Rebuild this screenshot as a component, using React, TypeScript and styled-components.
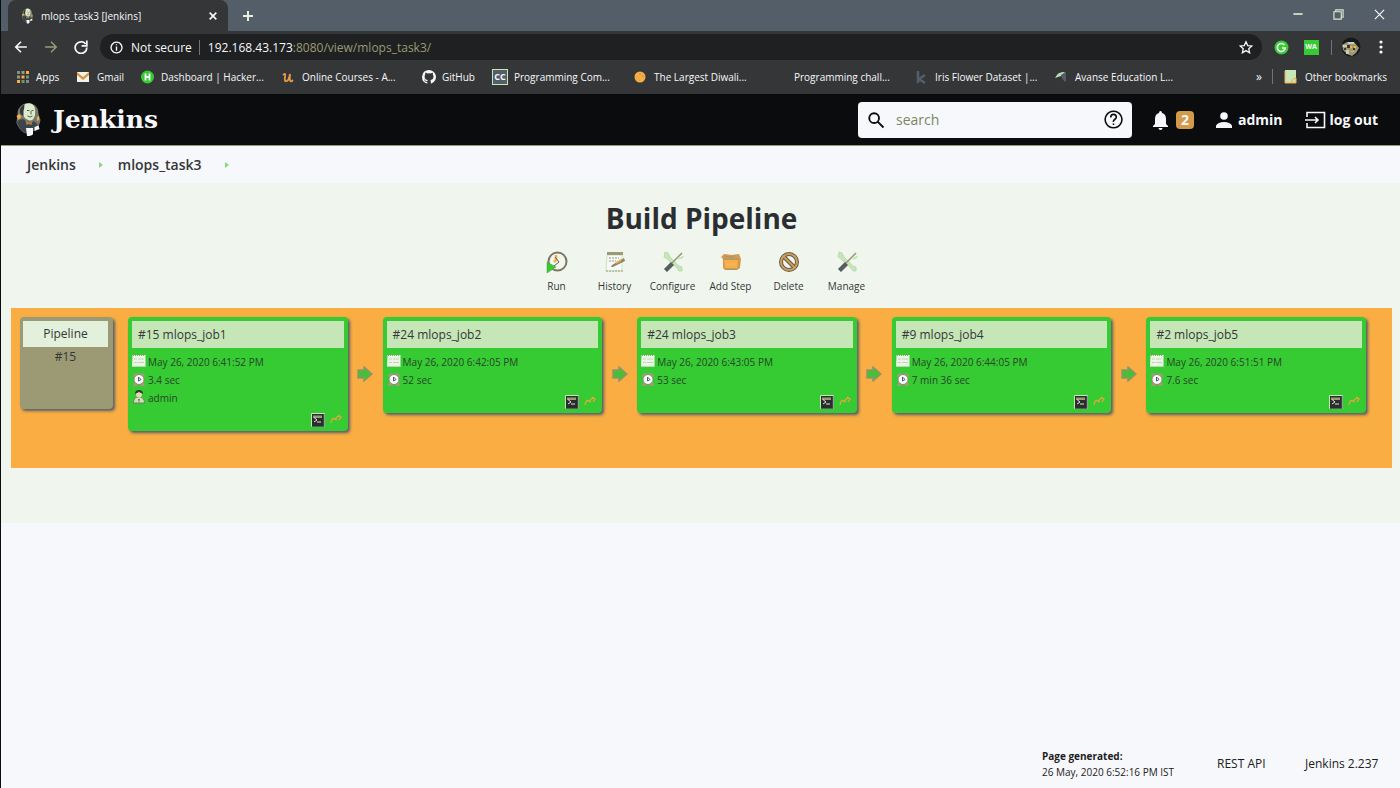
import React from "react";
import styled, { createGlobalStyle } from "styled-components";

const sans = `"Segoe UI", "Open Sans", "Noto Sans", sans-serif`;

const GlobalStyle = createGlobalStyle`
  * { box-sizing: border-box; }
  body { margin: 0; background: #f7f8fb; font-family: ${sans}; color: #343638; }
  button, input { font-family: inherit; }
  button { border: 0; padding: 0; background: none; color: inherit; cursor: pointer; }
  a { color: inherit; text-decoration: none; }
  svg { display: block; flex: none; }
`;

const Window = styled.div`
  display: flex;
  flex-direction: column;
  min-height: 100vh;
  border-left: 1px solid #0b0c0e;
`;

/* Browser chrome */

const TabStrip = styled.div`
  display: flex;
  height: 31px;
  background: #545e68;
  padding-left: 7px;
  color: #f7f8fb;
`;

const Tab = styled.div`
  display: flex;
  align-items: center;
  width: 220px;
  padding: 0 10px 0 12px;
  background: #343638;
  border-radius: 8px 8px 0 0;
`;

const TabTitle = styled.span`
  flex: 1;
  margin-left: 6px;
  font-size: 10px;
  white-space: nowrap;
`;

const IconButton = styled.button<{ $w?: number }>`
  display: flex;
  align-items: center;
  justify-content: center;
  width: ${(p) => p.$w ?? 30}px;
  flex: none;
`;

const WindowButtons = styled.div`
  display: flex;
  margin-left: auto;
  height: 28px;
`;

const Toolbar = styled.div`
  display: flex;
  align-items: center;
  height: 32px;
  padding-left: 5px;
  background: #343638;
  color: #f7f8fb;
`;

const AddressBar = styled.div`
  display: flex;
  align-items: center;
  flex: 1;
  height: 26px;
  margin-left: 4px;
  padding: 0 8px 0 10px;
  border-radius: 13px;
  background: #1e2021;
  font-size: 12px;
  white-space: nowrap;
`;

const Security = styled.span`
  margin: 0 7px 0 8px;
`;

const Divider = styled.span<{ $h: number }>`
  width: 1px;
  height: ${(p) => p.$h}px;
  background: #6d767e;
  flex: none;
`;

const DividerCell = styled.span`
  display: flex;
  justify-content: center;
  width: 18px;
`;

const Url = styled.div`
  flex: 1;
  margin-left: 8px;
  color: #9b9a74;
  outline: none;
`;

const Host = styled.span`
  color: #f7f8fb;
`;

const BookmarkBar = styled.nav`
  display: flex;
  align-items: center;
  height: 31px;
  padding: 0 13px 4px 14px;
  background: #343638;
  color: #f7f8fb;
  font-size: 10px;
  white-space: nowrap;
`;

const Bookmark = styled.a<{ $w?: number }>`
  display: flex;
  align-items: center;
  gap: 6px;
  width: ${(p) => (p.$w ? `${p.$w}px` : "auto")};
  flex: none;
`;

const More = styled.button`
  margin-left: auto;
  margin-right: 10px;
  font-size: 12px;
  line-height: 16px;
`;

const Folder = styled(Bookmark)`
  margin-left: 11px;
`;

/* Jenkins header */

const Header = styled.header`
  display: flex;
  align-items: center;
  height: 51px;
  padding: 0 22px 0 14px;
  background: #0b0c0e;
  color: #f7f8fb;
  font-size: 14px;
  font-weight: 700;
`;

const Brand = styled.a`
  display: flex;
  align-items: center;
  gap: 11px;
  font: 700 25px/32px "DejaVu Serif", Georgia, serif;
`;

const SearchBox = styled.form`
  display: flex;
  align-items: center;
  gap: 11px;
  width: 274px;
  height: 36px;
  margin: 0 20px 0 auto;
  padding: 0 9px;
  border-radius: 4px;
  background: #f7f8fb;
  color: #0b0c0e;
`;

const SearchInput = styled.input`
  flex: 1;
  min-width: 0;
  border: 0;
  padding: 0;
  outline: 0;
  background: none;
  font-size: 14px;
  &::placeholder { color: #7b8560; opacity: 1; }
`;

const HeaderLinks = styled.nav`
  display: flex;
  gap: 22px;
`;

const HeaderLink = styled.a<{ $gap: number }>`
  display: flex;
  align-items: center;
  gap: ${(p) => p.$gap}px;
  line-height: 20px;
  white-space: nowrap;
`;

const Badge = styled.span`
  width: 18px;
  height: 18px;
  border-radius: 4px;
  background: #d39a4c;
  text-align: center;
  line-height: 18px;
`;

const Breadcrumbs = styled.nav`
  display: flex;
  align-items: center;
  height: 38px;
  padding-left: 26px;
  border-top: 1px solid #9b9a74;
  background: #f7f8fb;
  font-size: 14px;
  font-weight: 600;
  svg { margin: 0 14px 0 22px; }
`;

/* Pipeline view */

const View = styled.main`
  min-height: 340px;
  padding: 14px 8px 0 10px;
  background: #f0f6ee;
`;

const Title = styled.h1`
  margin: 0;
  font-size: 28px;
  line-height: 42px;
  text-align: center;
  color: #2b2e31;
`;

const Actions = styled.div`
  display: flex;
  justify-content: center;
  height: 69px;
  padding-top: 12px;
`;

const Action = styled.button`
  display: flex;
  flex-direction: column;
  align-items: center;
  gap: 5px;
  width: 58px;
  font-size: 10px;
  line-height: 16px;
  white-space: nowrap;
`;

const Track = styled.section`
  display: flex;
  align-items: flex-start;
  min-height: 160px;
  padding: 9px 26px 0 9px;
  background: #f9ad42;
`;

const Revision = styled.div`
  width: 93px;
  height: 92px;
  margin-right: 15px;
  padding: 4px 5px 0 3px;
  flex: none;
  border-radius: 4px;
  background: #9b9a74;
  box-shadow: 2px 2px 3px #545e68;
  font-size: 12px;
  text-align: center;
  line-height: 20px;
`;

const RevisionTitle = styled.div`
  height: 26px;
  background: #e2f0dc;
  line-height: 26px;
`;

const Job = styled.article<{ $tall?: boolean }>`
  display: flex;
  flex-direction: column;
  flex: 1 1 0;
  min-width: 0;
  height: ${(p) => (p.$tall ? 114 : 96)}px;
  padding: 4px;
  border-radius: 4px;
  background: #36cb32;
  box-shadow: 2px 2px 3px #545e68;
`;

const JobTitle = styled.a`
  height: 27px;
  margin-bottom: 5px;
  padding-left: 6px;
  background: #c7e6b8;
  font-size: 12px;
  line-height: 28px;
  white-space: nowrap;
`;

const Detail = styled.div`
  display: flex;
  align-items: center;
  gap: 2px;
  height: 18px;
  font-size: 10px;
  line-height: 18px;
  color: #27452a;
  white-space: nowrap;
`;

const JobTools = styled.div`
  display: flex;
  justify-content: flex-end;
  gap: 5px;
  margin-top: auto;
  padding-right: 2px;
`;

const ArrowCell = styled.div`
  display: flex;
  justify-content: center;
  width: 35px;
  padding-top: 49px;
  flex: none;
`;

const Footer = styled.footer`
  display: flex;
  align-items: center;
  justify-content: flex-end;
  gap: 37px;
  margin-top: auto;
  padding: 0 18px 8px;
  font-size: 12px;
  line-height: 16px;
  color: #1d2022;
`;

const Generated = styled.div`
  min-width: 138px;
  font-size: 10px;
`;

const FooterLink = styled.a<{ $w: number }>`
  min-width: ${(p) => p.$w}px;
`;

/* Drawings */

const Butler = ({ w, h }: { w: number; h: number }) => (
  <svg width={w} height={h} viewBox="0 0 26 35">
    <path d="M2 14Q1 6 8 2Q14 0 19 3Q23 6 23 12L25 18Q24 24 21 26L14 22L3 24Q0 20 2 14Z" fill="#77796a" />
    <path d="M6 10Q6 3 11 1.500Q17 0 19 5Q20 8 19.500 13Q18 19 14 18.500Q9 17 7.500 13Z" fill="#dcebd0" />
    <path d="M5 12Q3 6 9 2Q9 6 8 9L8 14Z" fill="#343638" />
    <path d="M11.500 8.500h2.500M16 8.500h2M15.500 9v3.500M12 14q3 2 5 0" stroke="#545e40" fill="none" />
    <path d="M1 14l3-2 2 3-3 3zM21.500 15l2-1v4l-2 1z" fill="#f9ad42" />
    <path d="M1 20Q4 16 8 17L14 21L18 19Q22 20 23 25L20 28L10 31Q4 29 1 20Z" fill="#3c444d" stroke="#77796a" strokeWidth=".6" />
    <path d="M10 18.500l4 2.500 3-2-1 4-3-1-2 1z" fill="#b8803e" />
    <path d="M10.500 26h7v6q-1 2-6 2zM19 25l4-1.500 1 3.500-5 2z" fill="#f7f8fb" />
  </svg>
);

const Stroke = ({ d, s = 16, w = 2, box = 24, color = "currentColor" }: { d: string; s?: number; w?: number; box?: number; color?: string }) => (
  <svg width={s} height={s} viewBox={`0 0 ${box} ${box}`} fill="none" stroke={color} strokeWidth={w}>
    <path d={d} />
  </svg>
);

const markIcons: Record<string, React.ReactNode> = {
  apps: (
    <>
      {[0, 1, 2].map((r) => [0, 1, 2].map((c) => (
        <rect key={`${r}${c}`} x={2 + c * 4.5} y={2 + r * 4.5} width="3" height="3" fill={["#7d8b8a", "#9b9a74", "#f9ad42", "#6a9870"][(r + c) % 4]} />
      )))}
    </>
  ),
  gmail: (
    <>
      <path d="M1 3h12v10H1z" fill="#eef4e8" />
      <path d="M1 3l6 5 6-5v3l-6 5-6-5z" fill="#dc9440" />
    </>
  ),
  hacker: (
    <>
      <circle cx="7.5" cy="8" r="6.5" fill="#36cb32" />
      <path d="M5.5 4.5v7M9.5 4.5v7M5.5 8h4" stroke="#f7f8fb" strokeWidth="1.8" />
    </>
  ),
  udemy: <path d="M2 6Q5 3 4 8Q3 13 6 12Q8 11 9 5Q8 14 11 12L12 11" stroke="#e49d45" strokeWidth="1.8" fill="none" />,
  github: (
    <path fill="#f7f8fb" d="M8 1a7 7 0 0 0-2.2 13.6c.4 0 .5-.2.5-.4v-1.300c-2 .4-2.400-.8-2.400-.8-.3-.8-.8-1-.8-1-.6-.5.1-.5.1-.5.7.1 1.100.8 1.100.8.6 1.100 1.700.8 2.100.6 0-.5.2-.8.4-1-1.600-.2-3.200-.8-3.200-3.500 0-.8.3-1.400.7-1.900 0-.2-.3-.9.1-1.900 0 0 .6-.2 1.900.7a6.600 6.600 0 0 1 3.500 0c1.300-.9 1.900-.7 1.900-.7.4 1 .1 1.700.1 1.900.4.5.7 1.100.7 1.900 0 2.700-1.600 3.300-3.200 3.500.3.2.5.700.5 1.300v1.900c0 .2.1.4.5.4A7 7 0 0 0 8 1z" />
  ),
  diwali: (
    <>
      <circle cx="7" cy="8" r="5.500" fill="#f9ad42" />
      <path d="M7 4v2M4 8h1M9 7h2M6 11h1" stroke="#9b9a74" />
    </>
  ),
  kaggle: <path d="M4 2v12M11 6l-6 4 6 4" stroke="#545e68" strokeWidth="2.600" fill="none" />,
  avanse: (
    <>
      <path d="M1 9Q4 2 11 3L7 7Z" fill="#b7ddb0" />
      <path d="M7 6L12 3V13Q9 12 7 7Z" fill="#545e68" />
    </>
  ),
  folder: (
    <>
      <path d="M1 1h11v13H1z" fill="#c7e6b8" />
      <path d="M1 2v12h11V9l-3 1-2 4" stroke="#f9ad42" fill="none" />
    </>
  ),
  blank: null,
};

const CodeChef = styled.span`
  width: 16px;
  height: 16px;
  border: 1px solid #c7e6b8;
  background: #545e68;
  font-size: 9px;
  font-weight: 700;
  line-height: 14px;
  text-align: center;
`;

const WaBadge = styled.span`
  width: 15px;
  height: 15px;
  background: #36cb32;
  color: #f7f8fb;
  font-size: 7px;
  font-weight: 700;
  line-height: 14px;
`;

const MarkIcon = ({ kind }: { kind: string }) =>
  kind === "cc" ? <CodeChef>CC</CodeChef> : (
    <svg width="15" height="16" viewBox="0 0 15 16">{markIcons[kind]}</svg>
  );

const bookmarks = [
  { kind: "apps", label: "Apps", w: 61 },
  { kind: "gmail", label: "Gmail", w: 64 },
  { kind: "hacker", label: "Dashboard | Hacker...", w: 141 },
  { kind: "udemy", label: "Online Courses - A...", w: 140 },
  { kind: "github", label: "GitHub", w: 71 },
  { kind: "cc", label: "Programming Com...", w: 141 },
  { kind: "diwali", label: "The Largest Diwali...", w: 140 },
  { kind: "blank", label: "Programming chall...", w: 141 },
  { kind: "kaggle", label: "Iris Flower Dataset |...", w: 140 },
  { kind: "avanse", label: "Avanse Education L...", w: 141 },
];

const Tools = () => (
  <svg width="22" height="22" viewBox="0 0 22 22">
    <path d="M3 1l3 1 2 4 9 9 3 1 0 4-3 0-2-3L5 8 2 6z" fill="#c7e6b8" stroke="#b4d6a8" strokeWidth=".8" />
    <path d="M5 17l12-12M17 5l3-3" stroke="#9b9a74" strokeWidth="1.600" />
    <path d="M16 7q4 1 5-2" stroke="#c7e6b8" strokeWidth="2" fill="none" />
    <path d="M9 11l3 3-7 7-3-3z" fill="#545e68" stroke="#9b9a74" strokeWidth=".6" />
  </svg>
);

const actionIcons: Record<string, React.ReactNode> = {
  Run: (
    <svg width="22" height="22" viewBox="0 0 22 22">
      <circle cx="11.500" cy="10.500" r="9" fill="#f2f5ee" stroke="#777962" strokeWidth="2" />
      <path d="M10 4v5l-2 2" stroke="#f9ad42" strokeWidth="2.500" fill="none" />
      <path d="M9 6l4 5-5 4" stroke="#545e68" fill="none" />
      <path d="M1 11l9 5-9 6z" fill="#36cb32" stroke="#58914e" strokeWidth=".5" />
    </svg>
  ),
  History: (
    <svg width="22" height="22" viewBox="0 0 22 22">
      <path d="M3 4h15v16H2z" fill="#f7f8fb" stroke="#c7e6b8" />
      <path d="M3 1h16v3H3z" fill="#9b9a74" />
      <path d="M2 20h18M5 7h10M5 10h7" stroke="#9b9a74" strokeDasharray="2 1" />
      <path d="M8 14L20 7l1 3-12 6-2 0z" fill="#8a8968" />
      <path d="M12 12l5-3" stroke="#f9ad42" strokeWidth="2" />
    </svg>
  ),
  Configure: <Tools />,
  "Add Step": (
    <svg width="22" height="22" viewBox="0 0 22 22">
      <path d="M3 8l-2-2 3-3 8 1 7-1 2 5-1 9-3 2H5l-2-2z" fill="#d59a4d" />
      <path d="M4 9h14l-1 8H5z" fill="#f9ad42" />
      <path d="M3 8h16M5 5l5 1 5-1" stroke="#9b9a74" fill="none" />
      <path d="M7 12v3M10 12v3M13 12v3M16 12v3" stroke="#e4c277" />
      <path d="M5 18.500h12" stroke="#9b9a74" />
    </svg>
  ),
  Delete: (
    <svg width="22" height="22" viewBox="0 0 22 22">
      <circle cx="11" cy="11" r="8" fill="#f4f5ed" stroke="#545e58" strokeWidth="4" />
      <path d="M5 5l12 12" stroke="#545e58" strokeWidth="4" />
      <circle cx="11" cy="11" r="8" fill="none" stroke="#d49b4f" strokeWidth="2.200" />
      <path d="M5 5l12 12" stroke="#d49b4f" strokeWidth="2" />
    </svg>
  ),
  Manage: <Tools />,
};

const CalendarIcon = () => (
  <svg width="14" height="16" viewBox="0 0 14 16">
    <path d="M.5 1h13v12H0z" fill="#eef5e8" />
    <path d="M1 1.500h12" stroke="#9b9a74" strokeDasharray="1 1" />
    <path d="M2 5h3M6 5h6M2 8.500h3M6 8.500h6M0 12.500h13" stroke="#b9d9ac" />
  </svg>
);

const ClockIcon = () => (
  <svg width="14" height="16" viewBox="0 0 14 16">
    <path d="M1 3l3-2 3 1 3-1 3 2-1 3v5l1 3h-3l-3-1-3 1H1l1-3V6z" fill="#a39b76" />
    <circle cx="7" cy="7.500" r="5" fill="#f7f8fb" stroke="#8b8a6c" />
    <path d="M6.500 5v4l2.500-1.500z" stroke="#545e68" fill="none" />
  </svg>
);

const PersonIcon = () => (
  <svg width="14" height="16" viewBox="0 0 14 16">
    <path d="M1 13q1-6 4-6h4q3 1 4 6z" fill="#c7e6b8" stroke="#777962" />
    <circle cx="7" cy="4.500" r="3" fill="#e6d9a8" />
    <path d="M3 4q0-4 4-4t4 4L7 2z" fill="#343638" />
    <path d="M6 9l1 4 1-4" fill="#777962" />
  </svg>
);

const ConsoleIcon = () => (
  <svg width="14" height="14" viewBox="0 0 14 14">
    <path d="M.5.500h13v13H.5z" fill="#2a2c2e" stroke="#c7e6b8" />
    <path d="M2 2.500h9v2.500H2z" fill="#9b9a74" />
    <path d="M3 4.500l3 2.500-3 2M6 9h4" stroke="#e2ead8" fill="none" />
    <path d="M13 1v12.500H1" stroke="#545e68" fill="none" />
  </svg>
);

const RerunIcon = () => (
  <svg width="12" height="14" viewBox="0 0 12 14">
    <path d="M1 10Q2 4 5 6L7 7M5 7l2-3 3-1M8 2l3 2-2 3" stroke="#e7a53d" strokeWidth="1.300" fill="none" />
  </svg>
);

const GreenArrow = () => (
  <svg width="16" height="16" viewBox="0 0 16 16">
    <path d="M1 4h6V1l8 7-8 7v-3H1z" fill="#47bf38" stroke="#929469" strokeWidth="1.500" />
  </svg>
);

const jobs = [
  { title: "#15 mlops_job1", date: "May 26, 2020 6:41:52 PM", time: "3.4 sec", user: "admin" },
  { title: "#24 mlops_job2", date: "May 26, 2020 6:42:05 PM", time: "52 sec" },
  { title: "#24 mlops_job3", date: "May 26, 2020 6:43:05 PM", time: "53 sec" },
  { title: "#9 mlops_job4", date: "May 26, 2020 6:44:05 PM", time: "7 min 36 sec" },
  { title: "#2 mlops_job5", date: "May 26, 2020 6:51:51 PM", time: "7.6 sec" },
];

const Crumb = () => (
  <svg width="6" height="6" viewBox="0 0 6 6"><path d="M1 0l4 3-4 3z" fill="#8fd583" /></svg>
);

export default function App() {
  return (
    <>
      <GlobalStyle />
      <Window>
        <TabStrip>
          <Tab>
            <Butler w={15} h={16} />
            <TabTitle>mlops_task3 [Jenkins]</TabTitle>
            <IconButton $w={10} aria-label="Close tab"><Stroke d="M4 4l16 16M20 4L4 20" s={10} w={4} /></IconButton>
          </Tab>
          <IconButton $w={40} aria-label="New tab"><Stroke d="M12 2v20M2 12h20" s={12} w={4} color="#e8f0dc" /></IconButton>
          <WindowButtons>
            <IconButton $w={41} aria-label="Minimize"><Stroke d="M1 12h22" s={10} w={4} color="#dbe8d0" /></IconButton>
            <IconButton $w={41} aria-label="Restore"><Stroke d="M2 6h16v16H2zM6 6V2h16v16h-4" s={11} w={2.5} color="#dbe8d0" /></IconButton>
            <IconButton $w={41} aria-label="Close window"><Stroke d="M2 2l20 20M22 2L2 22" s={11} w={2.5} /></IconButton>
          </WindowButtons>
        </TabStrip>
        <Toolbar>
          <IconButton aria-label="Back"><Stroke d="M22 12H3M12 3l-9 9 9 9" s={14} w={2.8} /></IconButton>
          <IconButton aria-label="Forward"><Stroke d="M2 12h19M12 3l9 9-9 9" s={14} w={2.5} color="#9b9a74" /></IconButton>
          <IconButton aria-label="Reload"><Stroke d="M20 7a10 10 0 1 0 2 6M22 1v9h-9" s={14} w={3} /></IconButton>
          <AddressBar>
            <Stroke d="M12 2a10 10 0 1 0 .1 0zM12 10v8M12 6v2" s={13} w={2.5} />
            <Security>Not secure</Security>
            <Divider $h={15} />
            <Url role="textbox" aria-label="Address" tabIndex={0}>
              <Host>192.168.43.173</Host>:8080/view/mlops_task3/
            </Url>
            <IconButton $w={16} aria-label="Bookmark this page">
              <Stroke d="M12 3l3 6.500 7 .7-5.300 4.700 1.500 7-6.200-3.700-6.200 3.700 1.500-7L2 10.200l7-.7z" s={14} w={2.2} />
            </IconButton>
          </AddressBar>
          <IconButton $w={38} aria-label="Grammar">
            <svg width="15" height="15" viewBox="0 0 15 15">
              <circle cx="7.500" cy="7.500" r="7" fill="#36cb32" />
              <path d="M10.500 5a4 4 0 1 0 .8 3H8" stroke="#f7f8fb" strokeWidth="1.600" fill="none" />
            </svg>
          </IconButton>
          <IconButton $w={22} aria-label="WA extension"><WaBadge>WA</WaBadge></IconButton>
          <DividerCell><Divider $h={15} /></DividerCell>
          <IconButton $w={22} aria-label="Profile">
            <svg width="20" height="20" viewBox="0 0 20 20">
              <circle cx="10" cy="10" r="9.500" fill="#16181a" />
              <path d="M1 8l5-3 7 0 5 6-3 5-4 3-5-2-4-4z" fill="#9b9a74" />
              <path d="M2 8h4v2H2zM7 5h6v2H7zM5 13h3v4H5z" fill="#c7cfb8" />
              <path d="M9 9h2v2H9zM13 9h2v2h-2zM10 14h3v1h-3z" fill="#f9ad42" />
              <path d="M6 8h3v3H6zM12 11h2v2h-2zM3 11h2v2H3z" fill="#343638" />
            </svg>
          </IconButton>
          <IconButton $w={38} aria-label="Menu">
            <svg width="4" height="14" viewBox="0 0 4 14" fill="currentColor"><circle cx="2" cy="2" r="1.600" /><circle cx="2" cy="7" r="1.600" /><circle cx="2" cy="12" r="1.600" /></svg>
          </IconButton>
        </Toolbar>
        <BookmarkBar>
          {bookmarks.map((b) => (
            <Bookmark key={b.label} href="#" $w={b.w}><MarkIcon kind={b.kind} />{b.label}</Bookmark>
          ))}
          <More>»</More>
          <Divider $h={15} />
          <Folder href="#"><MarkIcon kind="folder" />Other bookmarks</Folder>
        </BookmarkBar>
        <Header>
          <Brand href="#"><Butler w={27} h={35} />Jenkins</Brand>
          <SearchBox>
            <Stroke d="M16 9.500A6.500 6.500 0 1 1 3 9.500a6.500 6.500 0 0 1 13 0zM14.500 14.500L22 22" s={18} w={2.5} />
            <SearchInput placeholder="search" aria-label="search" />
            <IconButton $w={19} type="button" aria-label="Search help">
              <Stroke d="M12 1.500a10.500 10.500 0 1 0 .1 0zM8.500 9.500q0-4 3.500-4t3.500 3.500q0 1.500-2 3T12 15M12 17v2" s={19} w={2} />
            </IconButton>
          </SearchBox>
          <HeaderLinks>
            <HeaderLink href="#" $gap={7}>
              <svg width="17" height="20" viewBox="0 0 17 20" fill="currentColor"><path d="M8.500 1q1.500 0 1.500 2 4 1 4 6v5l2 2v1H1v-1l2-2V9q0-5 4-6 0-2 1.500-2zM6.500 18h4q0 2-2 2t-2-2z" /></svg>
              <Badge>2</Badge>
            </HeaderLink>
            <HeaderLink href="#" $gap={6}>
              <svg width="16" height="16" viewBox="0 0 16 16" fill="currentColor"><circle cx="8" cy="4" r="3.800" /><path d="M0 16v-2.500Q2 10 8 10t8 3.500V16z" /></svg>
              admin
            </HeaderLink>
            <HeaderLink href="#" $gap={4}>
              <svg width="21" height="18" viewBox="0 0 21 18" fill="none" stroke="currentColor" strokeWidth="1.600"><path d="M2 6V1.500h17.500v15H2V12M0 9h13M10 6L13 9l-3 3" /></svg>
              log out
            </HeaderLink>
          </HeaderLinks>
        </Header>
        <Breadcrumbs>
          <a href="#">Jenkins</a><Crumb /><a href="#">mlops_task3</a><Crumb />
        </Breadcrumbs>
        <View>
          <Title>Build Pipeline</Title>
          <Actions>
            {Object.entries(actionIcons).map(([label, icon]) => (
              <Action key={label}>{icon}{label}</Action>
            ))}
          </Actions>
          <Track>
            <Revision><RevisionTitle>Pipeline</RevisionTitle>#15</Revision>
            {jobs.map((job, i) => (
              <React.Fragment key={job.title}>
                {i > 0 && <ArrowCell><GreenArrow /></ArrowCell>}
                <Job $tall={!!job.user}>
                  <JobTitle href="#">{job.title}</JobTitle>
                  <Detail><CalendarIcon />{job.date}</Detail>
                  <Detail><ClockIcon />{job.time}</Detail>
                  {job.user && <Detail><PersonIcon />{job.user}</Detail>}
                  <JobTools>
                    <IconButton $w={14} aria-label="Console"><ConsoleIcon /></IconButton>
                    <IconButton $w={12} aria-label="Re-run"><RerunIcon /></IconButton>
                  </JobTools>
                </Job>
              </React.Fragment>
            ))}
          </Track>
        </View>
        <Footer>
          <Generated><b>Page generated:</b><br />26 May, 2020 6:52:16 PM IST</Generated>
          <FooterLink href="#" $w={51}>REST API</FooterLink>
          <FooterLink href="#" $w={77}>Jenkins 2.237</FooterLink>
        </Footer>
      </Window>
    </>
  );
}
